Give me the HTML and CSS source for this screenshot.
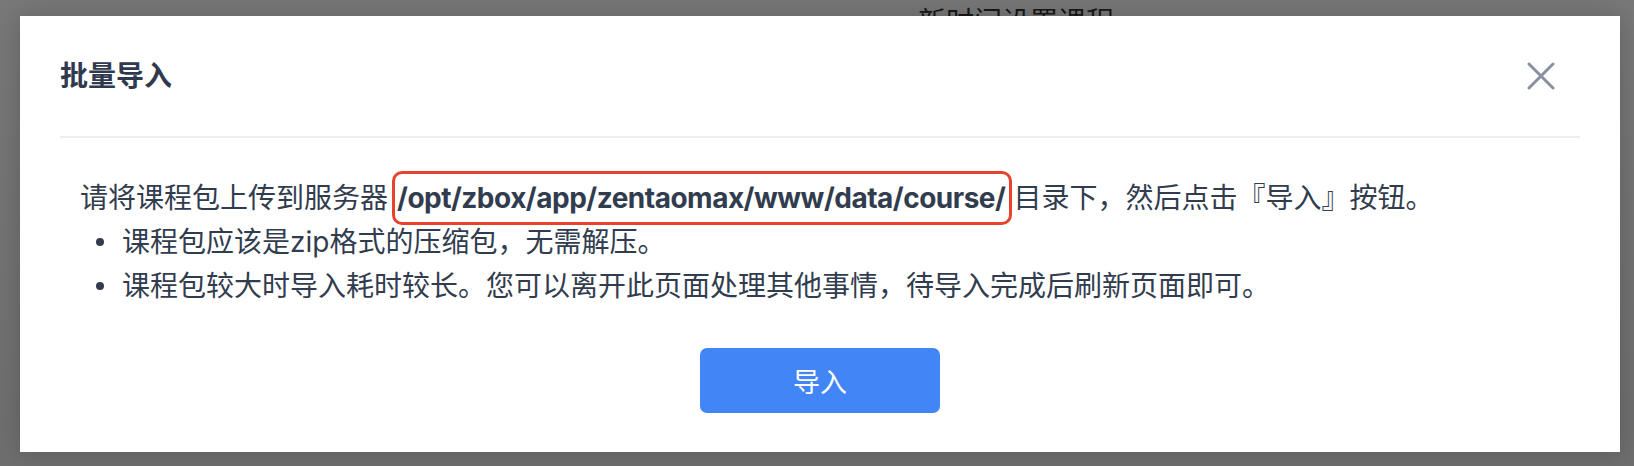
FILE: index.html
```html
<!DOCTYPE html>
<html lang="zh-CN">

<head>
    <meta charset="UTF-8" />
    <meta name="viewport" content="width=device-width, initial-scale=1.0" />
    <title>批量导入</title>
    <link rel="stylesheet" href="styles.css">
</head>

<body>
    <div class="page">
        <div class="page-title">新时间设置课程</div>
    </div>

    <div class="mask"></div>

    <div class="modal">
        <div class="modal-header">
            <h3 class="modal-title">批量导入</h3>
            <button class="close" aria-label="关闭">
                <svg width="28" height="28" viewBox="0 0 28 28">
                    <path d="M2 2 L26 26 M26 2 L2 26" stroke="#8a8fa0" stroke-width="3" stroke-linecap="round" fill="none" />
                </svg>
            </button>
        </div>

        <div class="modal-body">
            <p class="line">请将课程包上传到服务器<span class="path">/opt/zbox/app/zentaomax/www/data/course/</span>目录下，然后点击『导入』按钮。</p>
            <ul class="tips">
                <li>课程包应该是zip格式的压缩包，无需解压。</li>
                <li>课程包较大时导入耗时较长。您可以离开此页面处理其他事情，待导入完成后刷新页面即可。</li>
            </ul>
            <div class="actions">
                <button class="btn-primary">导入</button>
            </div>
        </div>
    </div>
</body>

</html>
```

FILE: styles.css
```css
body {
    margin: 0;
    height: 466px;
    overflow: hidden;
    font-family: "Inter", "Noto Sans CJK SC", sans-serif;
    background: #fff;
    color: #313c4e;
}

.page {
    padding: 2px 0 0 918px;
}

.page-title {
    font-size: 28px;
    line-height: 40px;
    color: #333;
}

.mask {
    position: absolute;
    top: 0;
    left: 0;
    right: 0;
    bottom: 0;
    background: linear-gradient(to bottom, rgba(0, 0, 0, 0.53), rgba(0, 0, 0, 0.57));
}

.modal {
    position: absolute;
    top: 16px;
    left: 20px;
    width: 1600px;
    height: 436px;
    background: #fff;
    box-shadow: 0 0 24px rgba(0, 0, 0, 0.2);
}

.modal-header {
    display: flex;
    align-items: center;
    justify-content: space-between;
    margin: 0 40px;
    padding: 40px 0;
    border-bottom: 2px solid #eeeeee;
}

.modal-title {
    margin: 0;
    font-size: 28px;
    line-height: 40px;
    font-weight: 700;
    color: #2f3a4f;
}

.close {
    display: flex;
    padding: 0;
    margin-right: 25px;
    border: none;
    background: none;
    cursor: pointer;
}

.modal-body {
    padding: 38px 60px 0;
    font-size: 28px;
    line-height: 44px;
}

.line {
    margin: 0;
    white-space: nowrap;
}

.path {
    font-weight: 700;
    letter-spacing: -0.5px;
    padding: 7px 4px 7px 2px;
    margin: 0 1px 0 4px;
    border: 3px solid #e8432a;
    border-radius: 10px;
}

.tips {
    list-style: none;
    margin: 0;
    padding: 0;
}

.tips li {
    position: relative;
    padding-left: 42px;
}

.tips li::before {
    content: "";
    position: absolute;
    left: 16px;
    top: 18px;
    width: 8px;
    height: 8px;
    border-radius: 50%;
    background: #313c4e;
}

.actions {
    display: flex;
    justify-content: center;
    margin: 40px -60px 0;
}

.btn-primary {
    width: 240px;
    height: 65px;
    border: none;
    border-radius: 7px;
    background: #4285f4;
    color: #fff;
    font-family: "Inter", "Noto Sans CJK SC", sans-serif;
    font-size: 27px;
    cursor: pointer;
}
```
